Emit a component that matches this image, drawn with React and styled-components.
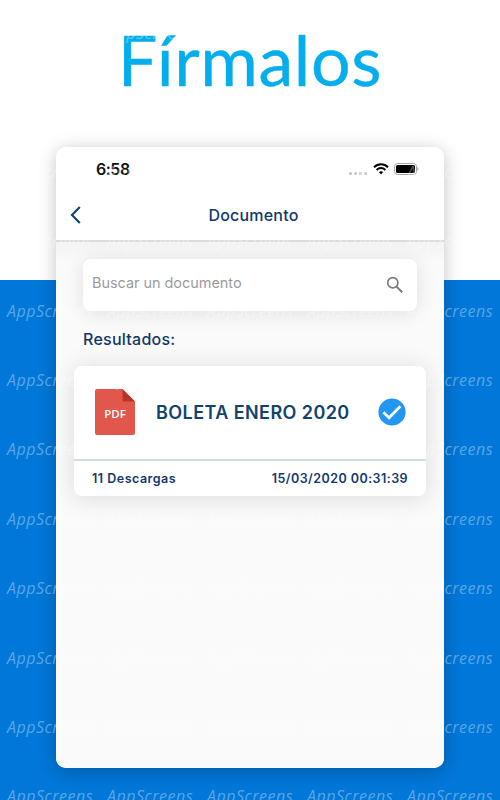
import React from "react";
import styled, { createGlobalStyle } from "styled-components";

const columns = [0, 1, 2, 3, 4];
const rows = Array.from({ length: 12 }, (_, i) => i);

const App = () => {
  return (
    <>
      <GlobalStyle />
      <Poster>
        <Title>Fírmalos</Title>
        <Phone>
          <StatusBar>
            <Time>6:58</Time>
            <StatusIcons>
              <Signal>
                <Dot />
                <Dot />
                <Dot />
                <Dot />
              </Signal>
              <WifiIcon />
              <BatteryIcon />
            </StatusIcons>
          </StatusBar>
          <NavBar>
            <BackIcon />
            <NavTitle>Documento</NavTitle>
          </NavBar>
          <Content>
            <SearchBox>
              <Placeholder>Buscar un documento</Placeholder>
              <SearchIcon />
            </SearchBox>
            <ResultsLabel>Resultados:</ResultsLabel>
            <Card>
              <CardBody>
                <PdfIcon />
                <DocName>BOLETA ENERO 2020</DocName>
                <CheckIcon />
              </CardBody>
              <CardFooter>
                <Downloads>11 Descargas</Downloads>
                <DateText>15/03/2020 00:31:39</DateText>
              </CardFooter>
            </Card>
          </Content>
        </Phone>
        <Watermarks aria-hidden="true">
          {rows.map((row) =>
            columns.map((col) => <Mark key={`${row}-${col}`}>AppScreens</Mark>)
          )}
        </Watermarks>
      </Poster>
    </>
  );
};

export default App;

const WifiIcon = () => (
  <svg width="16" height="12" viewBox="0 0 16 12" fill="none" stroke="#000">
    <path d="M1 4.2C5 .3 11 .3 15 4.2" strokeWidth="2.1" />
    <path d="M3.6 6.9c2.6-2.4 6.2-2.4 8.8 0" strokeWidth="2" />
    <path d="M8 11.4 5.7 9.1c1.3-1.2 3.3-1.2 4.6 0Z" fill="#000" stroke="none" />
  </svg>
);

const BatteryIcon = () => (
  <svg width="25" height="12" viewBox="0 0 25 12">
    <rect x=".5" y=".5" width="22" height="11" rx="3" fill="#fff" stroke="#a5a5a5" />
    <rect x="2" y="2" width="19" height="8" rx="1.6" fill="#000" />
    <path d="M23.4 4c1.4.6 1.4 3.4 0 4Z" fill="#a5a5a5" />
  </svg>
);

const BackIcon = () => (
  <svg width="12" height="18" viewBox="0 0 12 18" fill="none">
    <path d="M10.8 1 3 9l7.8 8" stroke="#0d4775" strokeWidth="2.2" />
  </svg>
);

const SearchIcon = () => (
  <svg width="18" height="18" viewBox="0 0 18 18" fill="none" stroke="#7b7b7b">
    <circle cx="6.8" cy="6.8" r="5.1" strokeWidth="1.7" />
    <path d="m10.6 10.6 5.6 5.6" strokeWidth="2" />
  </svg>
);

const PdfIcon = () => (
  <PdfBadge>
    <svg width="40" height="46" viewBox="0 0 40 46">
      <path d="M2 0h25.5L40 12.5V44a2 2 0 0 1-2 2H2a2 2 0 0 1-2-2V2a2 2 0 0 1 2-2Z" fill="#e2574c" />
      <path d="M27.5 0 40 12.5H29a1.5 1.5 0 0 1-1.5-1.5Z" fill="#b53629" />
    </svg>
    <PdfText>PDF</PdfText>
  </PdfBadge>
);

const CheckIcon = () => (
  <svg width="28" height="28" viewBox="0 0 28 28" fill="none">
    <circle cx="14" cy="14" r="13.6" fill="#2196f3" />
    <path d="m5.4 14.2 5.7 5.6L22.4 8.2" stroke="#fff" strokeWidth="2.7" />
  </svg>
);

const GlobalStyle = createGlobalStyle`
  * {
    box-sizing: border-box;
  }

  body {
    margin: 0;
    font-family: Inter, "Liberation Sans", sans-serif;
  }
`;

const Poster = styled.main`
  position: relative;
  display: flex;
  flex-direction: column;
  align-items: center;
  width: 500px;
  height: 800px;
  overflow: hidden;
  background: linear-gradient(#fff 280px, #0077d9 280px);
`;

const Title = styled.h1`
  display: flex;
  justify-content: center;
  height: 147px;
  margin: 0;
  padding-top: 18px;
  color: #04aeed;
  font-family: Lato, sans-serif;
  font-size: 70px;
  font-weight: 400;
  line-height: 83px;
  letter-spacing: 0.6px;
  -webkit-text-stroke: 0.4px #04aeed;
`;

const Phone = styled.section`
  flex: none;
  display: flex;
  flex-direction: column;
  width: 388px;
  height: 621px;
  overflow: hidden;
  border-radius: 10px;
  background: #fafafa;
  box-shadow: 0 3px 18px rgba(0, 0, 0, 0.24);
`;

const StatusBar = styled.div`
  display: flex;
  justify-content: space-between;
  align-items: center;
  height: 44px;
  padding: 0 25px 0 40px;
  background: #fff;
`;

const Time = styled.span`
  color: #111;
  font-size: 16px;
  font-weight: 600;
  letter-spacing: -0.5px;
`;

const StatusIcons = styled.div`
  display: flex;
  align-items: center;
  gap: 5px;
`;

const Signal = styled.div`
  display: flex;
  gap: 2px;
  padding: 8px 1px 0 0;
`;

const Dot = styled.span`
  width: 3px;
  height: 3px;
  border-radius: 1px;
  background: #c9c9c9;
`;

const NavBar = styled.header`
  display: grid;
  grid-template-columns: 12px 1fr 12px;
  align-items: center;
  flex: none;
  height: 51px;
  padding: 0 13px 1px;
  border-bottom: 2px solid #dcdcdc;
  background: #fff;
`;

const NavTitle = styled.h2`
  margin: 0 0 0 7px;
  color: #10386b;
  font-size: 16px;
  font-weight: 500;
  letter-spacing: 0.2px;
  text-align: center;
`;

const Content = styled.div`
  flex: 1;
  padding: 17px 18px 0;
  background: linear-gradient(#f3f3f3, #fafafa 20px);
`;

const SearchBox = styled.div`
  display: flex;
  justify-content: space-between;
  align-items: center;
  height: 52px;
  margin: 0 9px;
  padding: 0 13px 0 9px;
  border-radius: 8px;
  background: #fff;
  box-shadow: 0 2px 20px rgba(0, 0, 0, 0.11);
`;

const Placeholder = styled.span`
  padding-bottom: 5px;
  color: #9b9b9b;
  font-size: 14.5px;
  letter-spacing: -0.05px;
`;

const ResultsLabel = styled.h3`
  margin: 18px 9px 17px;
  color: #10386b;
  font-size: 16px;
  font-weight: 500;
  line-height: 20px;
  letter-spacing: 0.25px;
`;

const Card = styled.article`
  height: 130px;
  border-radius: 8px;
  background: #fff;
  box-shadow: 0 2px 24px rgba(0, 0, 0, 0.13);
`;

const CardBody = styled.div`
  display: flex;
  align-items: center;
  height: 95px;
  padding: 0 20px 1px 21px;
  border-bottom: 2px solid #d3dbdc;
`;

const PdfBadge = styled.div`
  display: grid;
  place-items: center;

  > * {
    grid-area: 1 / 1;
  }
`;

const PdfText = styled.span`
  padding-top: 2px;
  color: #fff;
  font-family: "Open Sans", sans-serif;
  font-size: 11.5px;
  font-weight: 600;
`;

const DocName = styled.h4`
  flex: 1;
  margin: 0 0 0 21px;
  color: #12436f;
  font-size: 18px;
  font-weight: 600;
  letter-spacing: 0.42px;
  white-space: nowrap;
`;

const CardFooter = styled.div`
  display: flex;
  justify-content: space-between;
  align-items: center;
  height: 35px;
  padding: 0 18px 0 18px;
  color: #12396b;
  font-size: 12.5px;
  font-weight: 600;
`;

const Downloads = styled.span`
  letter-spacing: 0.5px;
`;

const DateText = styled.time`
  letter-spacing: 0.45px;
`;

/* Repeated brand text laid over the whole poster */
const Watermarks = styled.div`
  position: absolute;
  inset: -2px 0 auto 0;
  display: grid;
  grid-template-columns: repeat(5, 100px);
  grid-auto-rows: 69.4px;
  pointer-events: none;
`;

const Mark = styled.span`
  padding: 24px 0 0 7px;
  color: rgba(255, 255, 255, 0.36);
  font-family: "Open Sans", sans-serif;
  font-size: 16px;
  font-style: italic;
  line-height: 22px;
  letter-spacing: 0.5px;
`;
